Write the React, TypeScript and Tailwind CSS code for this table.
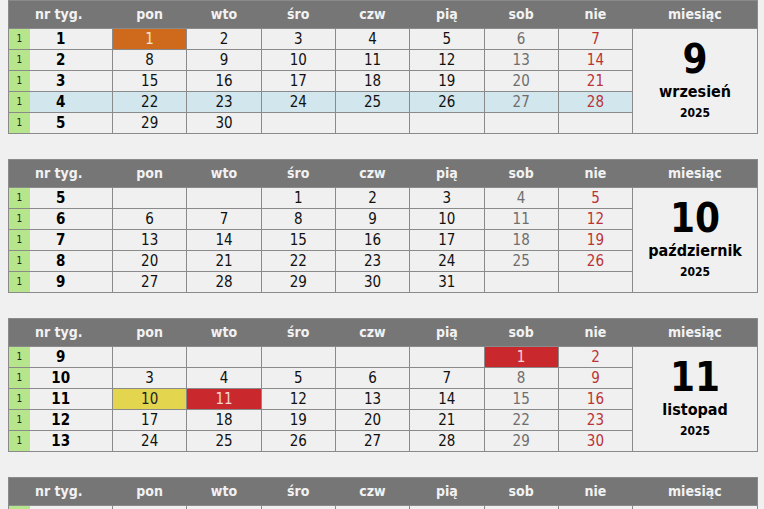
import React from 'react';

type Cell = { d?: number; bg?: 'orange' | 'red' | 'yellow' };
type Month = {
  num: number;
  name: string;
  year: number;
  weeks: number[];
  days: (Cell | null)[][];
  blueRow?: number;
};

const DAY_NAMES = ['pon', 'wto', 'śro', 'czw', 'pią', 'sob', 'nie'];

// build rows of 7 from first weekday (0 = monday) and length
const buildDays = (start: number, len: number, rows: number): (Cell | null)[][] => {
  const out: (Cell | null)[][] = [];
  let day = 1 - start;
  for (let r = 0; r < rows; r++) {
    const row: (Cell | null)[] = [];
    for (let c = 0; c < 7; c++) {
      row.push(day >= 1 && day <= len ? { d: day } : null);
      day++;
    }
    out.push(row);
  }
  return out;
};

const sept = buildDays(0, 30, 5);
sept[0][0] = { d: 1, bg: 'orange' };

const oct = buildDays(2, 31, 5);

const nov = buildDays(5, 30, 5);
nov[0][5] = { d: 1, bg: 'red' };
nov[2][0] = { d: 10, bg: 'yellow' };
nov[2][1] = { d: 11, bg: 'red' };

const dec = buildDays(0, 31, 5);

const MONTHS: Month[] = [
  { num: 9, name: 'wrzesień', year: 2025, weeks: [1, 2, 3, 4, 5], days: sept, blueRow: 3 },
  { num: 10, name: 'październik', year: 2025, weeks: [5, 6, 7, 8, 9], days: oct },
  { num: 11, name: 'listopad', year: 2025, weeks: [9, 10, 11, 12, 13], days: nov },
  { num: 12, name: 'grudzień', year: 2025, weeks: [14, 15, 16, 17, 18], days: dec },
];

const bgClass = {
  orange: 'bg-[#cf6a1c] text-[#f3e4d6]',
  red: 'bg-[#c9292c] text-[#f4d6d6]',
  yellow: 'bg-[#e4d54f] text-[#222]',
};

const MonthTable = ({ m }: { m: Month }) => (
  <table className="table-fixed border-collapse w-[749px] border border-[#8a8a8a]">
    <colgroup>
      <col className="w-[21px]" />
      <col className="w-[83px]" />
      {DAY_NAMES.map((d) => (
        <col key={d} className="w-[74.3px]" />
      ))}
      <col className="w-[125px]" />
    </colgroup>
    <thead>
      <tr className="h-[28px] bg-[#767676] text-[#f2f2f2] font-bold text-[14px]">
        <th colSpan={2} className="pr-[4px] font-bold">nr tyg.</th>
        {DAY_NAMES.map((d) => (
          <th key={d} className="font-bold">{d}</th>
        ))}
        <th className="font-bold">miesiąc</th>
      </tr>
    </thead>
    <tbody>
      {m.weeks.map((w, ri) => {
        const blue = m.blueRow === ri;
        return (
          <tr key={ri} className="h-[21px]">
            <td className="bg-[#b7e58c] text-[10px] text-[#222] text-center border-y border-[#8a8a8a] leading-none">1</td>
            <td className={`text-center pr-[20px] font-bold text-[15px] text-black border-y border-[#8a8a8a] leading-none ${blue ? 'bg-[#d2e6ee]' : 'bg-[#f0f0f0]'}`}>
              {w}
            </td>
            {m.days[ri].map((c, ci) => {
              const base = c?.bg
                ? bgClass[c.bg]
                : `${blue ? 'bg-[#d2e6ee]' : 'bg-[#f0f0f0]'} ${ci === 5 ? 'text-[#6e6e6e]' : ci === 6 ? 'text-[#bb3337]' : 'text-[#111]'}`;
              return (
                <td
                  key={ci}
                  className={`text-center text-[15px] leading-none border border-[#8a8a8a] ${base}`}
                >
                  {c?.d ?? ''}
                </td>
              );
            })}
            {ri === 0 && (
              <td rowSpan={5} className="border border-[#8a8a8a] bg-[#f0f0f0] text-center align-top text-black">
                <div className="flex flex-col items-center pt-[10px]">
                  <div className="text-[40px] font-bold leading-[40px]">{m.num}</div>
                  <div className="text-[16px] font-bold leading-[20px] mt-[3px]">{m.name}</div>
                  <div className="text-[12px] font-bold leading-[16px] mt-[3px]">{m.year}</div>
                </div>
              </td>
            )}
          </tr>
        );
      })}
    </tbody>
  </table>
);

export default function App() {
  return (
    <div
      className="min-h-screen bg-[#f0f0f0] pl-[8px] flex flex-col gap-[25px]"
      style={{ fontFamily: "'DejaVu Sans Condensed', 'DejaVu Sans', sans-serif" }}
    >
      {MONTHS.map((m) => (
        <MonthTable key={m.num} m={m} />
      ))}
    </div>
  );
}
